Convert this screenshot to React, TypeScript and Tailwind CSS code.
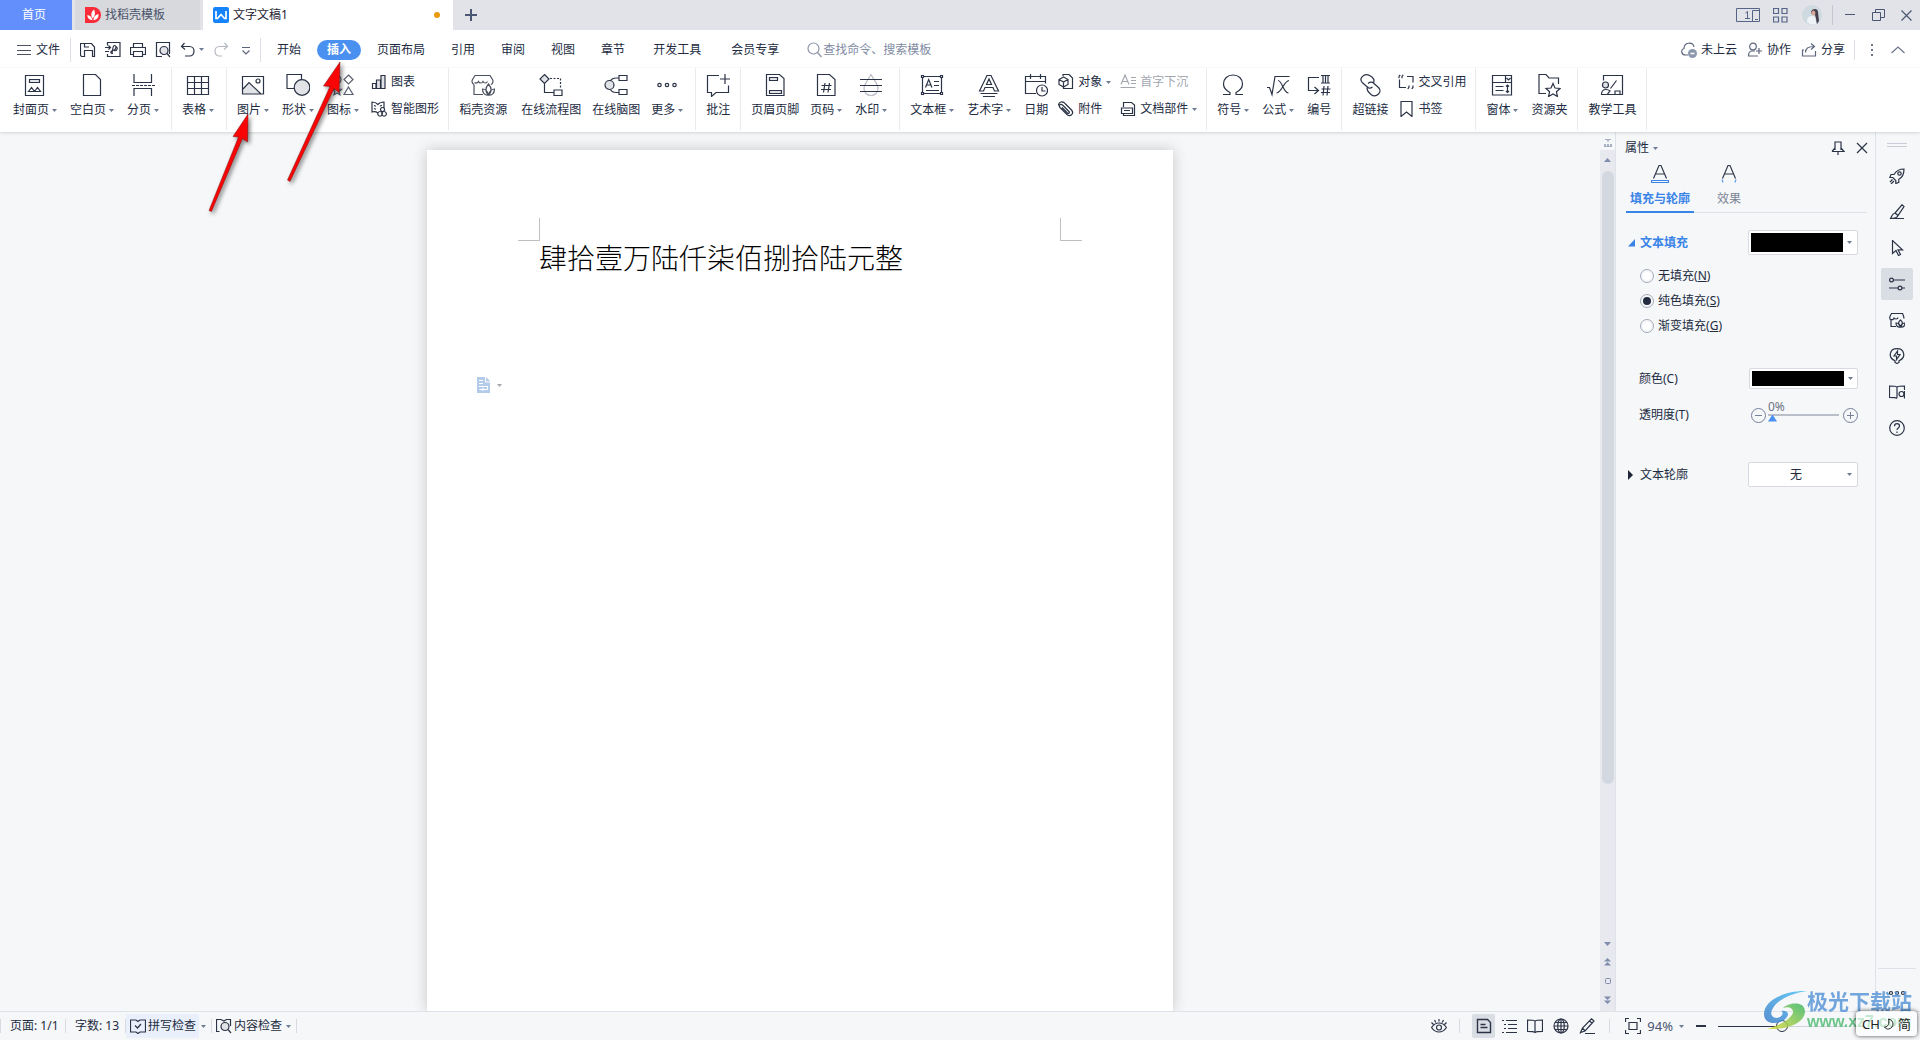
import React from "react";

const INK = "#2b3346";

type IconProps = { children: React.ReactNode; size?: 16 | 24; color?: string };

function Icon({ children, size = 16, color = INK }: IconProps) {
  return (
    <svg
      className="shrink-0"
      width={size}
      height={size}
      viewBox={`0 0 ${size} ${size}`}
      fill="none"
      stroke={color}
      strokeWidth={1.2}
      aria-hidden="true"
    >
      {children}
    </svg>
  );
}

function Caret({ color = "#6f7b92" }: { color?: string }) {
  return (
    <svg className="shrink-0" width="5" height="3" viewBox="0 0 5 3" fill={color} aria-hidden="true">
      <path d="M0 0h5L2.500 3z" />
    </svg>
  );
}

const G = "#e2e3e6";

/* ---------- large ribbon icons ---------- */
const big = {
  cover: (
    <>
      <path d="M2.500 2.500h18v20h-18z" />
      <path d="M6.500 6.500h10v3h-10z" fill={G} />
      <path d="M5.500 18.500l3-4 3 4zM11.500 18.500l3-4 3 4z" />
    </>
  ),
  blank: <path d="M3.500 1.500h12l5 5v16h-17z" />,
  pageBreak: (
    <>
      <path d="M3 1v8.500h17.500V1M3 23v-7.500h17.500V23" />
      <path d="M1 12.500h23" strokeDasharray="3 1" />
    </>
  ),
  table: (
    <>
      <path d="M1.500 3.500h21v18h-21z" />
      <path d="M1.500 9.500h21M1.500 15.500h21M8.500 3.500v18M15.500 3.500v18" />
    </>
  ),
  picture: (
    <>
      <path d="M2 17l6-7 12 11H2z" fill={G} stroke="none" />
      <path d="M1.500 3.500h21v17.500h-21zM2 16l6-6.500 12 11.500" />
      <circle cx="17" cy="8" r="2" />
    </>
  ),
  shape: (
    <>
      <path d="M1 1.500h14.500v14H1z" />
      <circle cx="16" cy="14.500" r="7.800" fill={G} />
    </>
  ),
  iconLib: (
    <>
      <circle cx="6" cy="6.500" r="4" />
      <path d="M17.500 2l4.500 4.500-4.500 4.500L13 6.500zM17.500 14l4.500 7.500h-9zM6 13l1.300 3 3.200.3-2.400 2.200.8 3.200L6 20l-2.900 1.700.8-3.200-2.400-2.200 3.200-.3z" />
    </>
  ),
  store: (
    <>
      <path d="M3 11.500v10h9M3 11.500C.5 10 .8 8 1.500 6.500L4 2.500h15l2.500 4c.8 1.500.8 4-1.500 5M3.500 9.500c1.500 1 3 .5 4-1 .8 2 3.500 2 4.500 0 1 2 3.500 2 4.500 0" />
      <path d="M17.500 22c-3.500-3-3.500-7 0-11 3.500 4 3.500 8 0 11zM17.500 22c-4 .5-6-2-6-6 3 0 5 2 6 6zM17.500 22c4 .5 6-2 6-6-3 0-5 2-6 6z" />
    </>
  ),
  flow: (
    <>
      <path d="M5.500 1.500l4.500 4.500-4.500 4.500L1 6z" fill={G} />
      <path d="M5.500 10.500v9h9.500M15 17h8v5.500h-8z" />
      <path d="M11 5.500h10.500V16" strokeDasharray="2 1.500" />
    </>
  ),
  mind: (
    <>
      <path d="M15 2.500h8v5h-8zM15 16.500h8v5h-8zM15 5H12c-3 0-4.500 1-5.500 3M15 19.500H12c-3 0-4.500-1-5.500-3" />
      <circle cx="5.500" cy="12" r="4.500" fill={G} />
    </>
  ),
  more: (
    <>
      <circle cx="4.500" cy="12" r="1.700" />
      <circle cx="12" cy="12" r="1.700" />
      <circle cx="19.500" cy="12" r="1.700" />
    </>
  ),
  comment: <path d="M13 2.500H1.500v17h4v4l4.500-4h12.500v-7M19 1v10M14 6h10" />,
  headerFooter: (
    <>
      <path d="M3.500 1.500h13l4.500 4v17H3.500z" />
      <path d="M6.500 4.500h8v3h-8zM6.500 17.500h12v3h-12z" fill={G} />
    </>
  ),
  pageNo: <path d="M3.500 1.500h12l5.500 5v16H3.500zM11 10l-1.500 9.500M15.500 10L14 19.500M7.500 12.500h10M7 16.500h10" />,
  watermark: (
    <>
      <path d="M12 1.500C9 7 5 11 5 15.500c0 4 3 7 7 7s7-3 7-7C19 11 15 7 12 1.500z" stroke="#b9bdc6" />
      <path d="M1 6.500h22M1 12.500h22M1 18.500h22" />
    </>
  ),
  textBox: (
    <>
      <path d="M2.500 3.500h19v17h-19z" />
      <path d="M1.500 2.500h2v2h-2zM20.500 2.500h2v2h-2zM1.500 19.500h2v2h-2zM20.500 19.500h2v2h-2z" fill="#fff" />
      <path d="M5.500 14.500l3.200-8 3.200 8M6.500 12h4.500M14 8.500h5M14 12.500h5M6 17.500h13" />
    </>
  ),
  wordArt: (
    <path d="M2.500 18L10 2.500h4L21.500 18h-4l-1.500-3.500H8L6.500 18zM9.500 11.500h5L12 6zM3.500 20.500h17M6 23.500h12" />
  ),
  date: (
    <>
      <path d="M12 20.500H1.500v-17h20v7M1.500 8.500h20M6.500 1v5M16.500 1v5" />
      <circle cx="18" cy="17.500" r="5.500" fill="#fff" />
      <path d="M18 14v4h3.500" />
    </>
  ),
  omega: <path d="M2 21.500h7v-2C5 17.500 2.500 15 2.500 11c0-5.500 4-9 9.500-9s9.500 3.500 9.500 9c0 4-2.500 6.500-6.500 8.500v2h7" />,
  formula: <path d="M1 14.500h2.500l2.500 7L9 3.500h14.500M12 7.500c4 0 5.500 12.500 10.500 12.500M23 7.500C18 8 16 19 10.500 20" />,
  numbering: (
    <path d="M12 4.500H1.500v13H11M7.500 14l4 3.500-4 3.500M14 2.500h9M14 10h9M16 2.500V10M18.500 2.500V10M21 2.500V10M17 13l-1 9.500M21 13l-1 9.500M14.500 16h9M14 19.500h9" />
  ),
  link: (
    <path d="M15 10.500c2-2.500.5-5-1-6.500L12 2.800c-3-1.800-5.500-1.500-7.500.5s-2 4.500 0 6.500l4.500 4c2 2 4 1.500 5.500 0M10 13.500c-2 2.500-.5 4.500 1 6l2 2c2.500 2 5 2 7.500-.5 2-2 2-4.500 0-6.500L16 10.500c-2-2-4-1.500-6 0" />
  ),
  form: (
    <path d="M2.500 2.500h19v19.500h-19zM2.500 9.500h19M15.500 2.500v7M16.500 5l2 2 2-2M5.500 13.500h8M5.500 17.500h8M17.500 12v7.500M16 13.500l1.500-1.500 1.500 1.500M16 18l1.500 1.500L19 18" />
  ),
  folder: (
    <path d="M9 20.500H2V1.500h7l3 3.500h9.500v6M16 10.500l2 4.500 5 .500-3.600 3.200 1 4.800L16 21l-4.400 2.500 1-4.800L9 15.500l5-.500z" />
  ),
  teach: (
    <>
      <path d="M3.500 7.500v-5h19v19h-21c0-3 1.500-5 4.500-5 2 0 3 .5 4 1.500l-2.500 3M10.500 15.500l6-8M15 21.500V18h5v3.500" />
      <circle cx="5.500" cy="12" r="3" fill={G} />
    </>
  ),
};

/* ---------- small icons ---------- */
const sm = {
  menu: <path d="M1 3.500h14M1 8.500h14M1 12.500h14" stroke="#4b5263" />,
  save: <path d="M4 14.500H1.500l-1-1V1.500h11L14.500 5v9.500H12M4.500 15V8.500h8V15M4.500 1.500V5H9" />,
  pdf: <path d="M2.500 3.500v-3h12.500v14H2.500V12M0 5.500h5M3.500 3.500l2 2-2 2M0 9.500h4M8 11.500c-3 0-3-2.500 0-3s4-5 1.500-5S8 11.500 6.500 12M9 8.500c4 .5 4-3.500 1.500-4" />,
  print: <path d="M3.500 5V1.500h9V5M3.500 12.500h-3V5.500h15v7h-3M3.500 9.500h9v5h-9z" />,
  preview: (
    <>
      <path d="M7 14.500H1.500V.500h13V12" />
      <circle cx="9" cy="8.500" r="4" fill={G} />
      <path d="M12 11.500l3 3.500" />
    </>
  ),
  undo: <path d="M4.500 1L1.500 4.500l3.500 3M2 4.500h7.500c6 0 6 9.500 0 9.500H5" />,
  redo: <path d="M11.500 1l3 3.500-3.500 3M14 4.500H6.500c-6 0-6 9.500 0 9.500H9" />,
  more: <path d="M4 5.500h8M4.500 8.500L8 12l3.500-3.500" stroke="#5b6479" />,
  search: (
    <>
      <circle cx="6.500" cy="6.500" r="5.500" />
      <path d="M10.500 10.500l4 4.500" />
    </>
  ),
  cloud: (
    <>
      <path d="M7 13H4.500C0 13-.5 7.500 3 6.500c0-6.500 9-7 10-1.500" />
      <circle cx="11.500" cy="11.500" r="4.500" fill="#8d98af" stroke="none" />
      <path d="M9.500 11.500h4" stroke="#fff" strokeWidth="1.500" />
    </>
  ),
  people: (
    <>
      <circle cx="6" cy="4.500" r="3.300" />
      <path d="M11 14H1.500c0-3 1-5 3.500-5h3M12 6v6M9 9h6" />
    </>
  ),
  share: <path d="M3 8H1.500v6h13V9M4.500 10.500c0-4 2.500-6 8.500-6M10 1.500l3.500 3-3.500 3" />,
  chart: (
    <>
      <path d="M1.500 9.500h3.500v5H1.500z" />
      <path d="M5.500 6h4v8.500h-4zM10 1.500h4v13h-4z" fill={G} />
    </>
  ),
  smart: (
    <path d="M7 12C5 10.500 3 10.500 1 11V1C3.500 1 5.500 2 7 3.500 8.500 1.500 10.500 1 13 1v6M3 4.500l2 .8M3 7.500l2 .8M9 5.300l1.800-1M11.500 6.500a2 2 0 1 0 .1 0M9 10.500a2.300 2.300 0 1 0 .1 0M13 10.500a2.300 2.300 0 1 0 .1 0" />
  ),
  object: (
    <>
      <path d="M5 2V.500h6l3.500 3.500v10.500H5.500v-2" />
      <path d="M5.500 3l4.500 2.500v5L5.500 13 1 10.500v-5zM1 5.500L5.500 8 10 5.500M5.500 8v5" fill="#fff" />
    </>
  ),
  clip: <path d="M4 6.500L9.500 12c1.200 1 2.500-.3 1.500-1.500L4.500 4C2.500 2.500.300 4.500 2 6.500l7 7c3.500 3 7.500-1 4.500-4.500L7.500 3C5-.300.500.500.500 4.500" />,
  dropCap: <path d="M1 10.500L5 1l4 9.500M2.500 7.500h5M11 3.500h5M11 6.500h5M11 9.500h5M.5 13.500h15" />,
  docPart: <path d="M3.500 6V1.500h8L14.500 4v10.500h-11v-2M1.500 7h11v5.500h-11zM4 9.500h6" />,
  crossRef: (
    <path d="M1.500 5.500v8H8M9 2.500h6v6M1 4.200V2.500L2.200.8M4 4.200V2.500L5.200.8M11 11.500v1.700L9.800 15M15 11.500v1.700L13.800 15" />
  ),
  bookmark: <path d="M3 .500h11v15L8.500 11 3 15.500z" />,
  pin: <path d="M5 10V2h6v8M2 11.500h12l-3-3.500M2 11.500L5 8M8 11.500V15" />,
  close: <path d="M3 3l10 10M13 3L3 13" />,
  rocket: (
    <>
      <path d="M15 1C10.500 1 7 3 5 6.500H2L.8 9.500h3l3 3v3l3-1.200v-3C13.500 9.500 15 5.500 15 1zM3.500 11.500L1 14M5 13l-3 3" />
      <circle cx="10.500" cy="5.500" r="1.700" />
    </>
  ),
  brush: <path d="M1 14.500h14M13 .800l2 1.700-6 9-3-2.500zM6 9c-3 .5-3 3-4.500 5.500 3 0 6.500 0 7.500-3z" />,
  cursor: <path d="M3.500.500v13l3.500-3 2.500 5 2-1-2.500-4.700h4.500z" />,
  sliders: (
    <>
      <path d="M4 4h12M0 12h9M13 12h3" />
      <circle cx="2.500" cy="4" r="1.900" />
      <circle cx="11" cy="12" r="1.900" />
    </>
  ),
  storeSmall: (
    <>
      <path d="M2 8v6.500h5M2 8C0 7 .5 4.500 2.500 1.500h11c1 2 1.500 3 1.500 5M2 7.500c2 .5 3-.500 3-2 0 2 4 2 4 0" />
      <path d="M11.500 15c-2.500-2.500-2.500-5 0-7 2.500 2 2.500 4.500 0 7zM11.500 15c-3 .5-4.500-1-4.500-4 2.500 0 4 1.500 4.500 4zM11.500 15c3 .5 4.500-1 4.500-4-2.500 0-4 1.500-4.500 4z" />
    </>
  ),
  bulb: <path d="M6 14.500v-1.700C-1.500 9.500.5.700 8 .700s9.500 8.800 2 12.100v1.700l-2 1zM8.500 3L5 8h2.500v3.500L11 6.500H8.500z" />,
  bookSearch: (
    <>
      <path d="M8 14.500c-1-1-3-1.200-7.500-1.200V2C5 2 7 2 8 3c1-1 3-1 7.500-1v4M8 3v11" />
      <circle cx="12.500" cy="10" r="2.500" />
      <path d="M15.500 7v7.500" />
    </>
  ),
  help: (
    <>
      <circle cx="8" cy="8" r="7.300" />
      <path d="M5.500 6.200c0-3.500 5-3.200 5-.300C10.500 8 8 8 8 10M8 11.500v1.500" />
    </>
  ),
  spell: <path d="M6 14H.500V2H6l2 1.500L10 2h5.500v12H10l-2 1.500zM5 7.500L7.500 10 11 6" />,
  content: (
    <>
      <path d="M3.500 13.500h-3v-12H5L8 3l2.500-1.500h4V8" />
      <circle cx="9" cy="8.500" r="4" fill={G} />
      <path d="M12 11.500l3 3.500" />
    </>
  ),
  eye: (
    <>
      <path d="M.5 9.500c4-6 11-6 15 0-4 6-11 6-15 0zM8 1v2.500M3.500 2l1.300 2.500M12.500 2l-1.300 2.500M.5 4.500l2 2M15.500 4.500l-2 2" />
      <circle cx="8" cy="9.500" r="2.500" />
    </>
  ),
  pageView: <path d="M1.500 1.500h10l3 3v10h-13zM4.500 6.500h5M4.500 9.500h7" strokeWidth="1.400" />,
  outline: <path d="M1 2.500h2M5 2.500h11M3 6.500h2M7 6.500h9M3 10.500h2M7 10.500h9M1 14.500h2M5 14.500h11" />,
  book: <path d="M8 14.500c-1-1-3-1.200-7.500-1.200V2C5 2 7 2 8 3c1-1 3-1 7.500-1v11.300c-4.500 0-6.500.2-7.500 1.200zM8 3v11" />,
  globe: (
    <>
      <circle cx="8" cy="8" r="7" />
      <ellipse cx="8" cy="8" rx="3.300" ry="7" />
      <path d="M1 8h14M2 4.500h12M2 11.500h12M8 1v14" />
    </>
  ),
  edit: <path d="M6 15.500h10M12.500.800L15 3 6 13l-4.500 1.500L3.500 10zM10.500 3L13 5M3.500 10L6 13M1 15.500l1-1.500" />,
  fit: <path d="M.5 4V.500H4M12 .500h3.500V4M15.500 12v3.500H12M4 15.500H.500V12M4 4.500h8v7H4z" />,
};

type RibbonButtonProps = { icon: keyof typeof big; label: string; caret?: boolean; color?: string };

function RibbonButton({ icon, label, caret, color }: RibbonButtonProps) {
  return (
    <button type="button" className={caret ? "flex flex-col items-center gap-[5px] pt-[5px] pr-[2px]" : "flex flex-col items-center gap-[5px] pt-[5px]"}>
      <Icon size={24} color={color}>{big[icon]}</Icon>
      <span className="flex h-4 items-center gap-[3px]">
        {label}
        {caret && <Caret />}
      </span>
    </button>
  );
}

type SmallButtonProps = { icon: keyof typeof sm; label: string; caret?: boolean; disabled?: boolean };

function SmallButton({ icon, label, caret, disabled }: SmallButtonProps) {
  return (
    <button type="button" disabled={disabled} className="flex h-4 items-center gap-1 disabled:text-[#a3a7b0]">
      <Icon color={disabled ? "#a3a7b0" : INK}>{sm[icon]}</Icon>
      {label}
      {caret && <Caret />}
    </button>
  );
}

function Group({ children }: { children: React.ReactNode }) {
  return <div className="flex shrink-0 items-start gap-[11px] border-r border-[#eaebee] px-[10px]">{children}</div>;
}

function Stack({ children }: { children: React.ReactNode }) {
  return <div className="-mx-px flex flex-col gap-[11px] pt-[6px]">{children}</div>;
}

function IconButton({ icon, label, color }: { icon: keyof typeof sm; label: string; color?: string }) {
  return (
    <button type="button" aria-label={label}>
      <Icon color={color}>{sm[icon]}</Icon>
    </button>
  );
}

function TitleBar() {
  return (
    <header className="flex h-[30px] shrink-0 bg-[#e1e3e8]">
      <button type="button" className="w-[72px] bg-[#628ffb] pr-1 text-white">首页</button>
      <button type="button" className="ml-[3px] flex w-[125px] items-center gap-1 bg-[#d7d9dd] pl-[10px] text-[#49536a]">
        <svg width="16" height="16" viewBox="0 0 16 16" aria-hidden="true">
          <path d="M0 0h8a8 8 0 0 1 0 16H0z" fill="#fb2b3a" />
          <path d="M7.500 13C4.500 13 2.500 11.500 2.300 8c2.500.3 4.200 1.500 5.200 5zM7.700 11.500C5.500 8.500 6 5 9 2.500c1.500 3 1.500 6-1.300 9zM8.500 13c0-3.500 2-5.500 5-6 .3 3.500-1.500 6-5 6z" fill="#fff" />
        </svg>
        找稻壳模板
      </button>
      <button type="button" className="ml-[3px] flex w-[250px] items-center gap-1 bg-white pr-[13px] pl-[10px] text-[#1d2433]">
        <svg width="16" height="16" viewBox="0 0 16 16" aria-hidden="true">
          <rect width="16" height="16" rx="2" fill="#1583fb" />
          <path d="M3 4v7.500h1.500L8 7.500l3.500 4H13V4" fill="none" stroke="#fff" strokeWidth="1.700" />
        </svg>
        文字文稿1
        <span className="ml-auto size-[6px] rounded-full bg-[#e99a0c]" />
      </button>
      <button type="button" aria-label="新建" className="ml-3">
        <svg width="12" height="12" viewBox="0 0 12 12" stroke="#4a5672" strokeWidth="2" aria-hidden="true">
          <path d="M0 6h12M6 0v12" />
        </svg>
      </button>
      <div className="ml-auto flex items-center pr-2">
        <button type="button" aria-label="窗口布局">
          <svg width="24" height="14" viewBox="0 0 24 14" fill="none" stroke="#566486" aria-hidden="true">
            <path d="M.5.500h23v13H.500zM16.500 13.500v-11h7M19 11.500h3M9.500 5l2-1.500V11M9 10.500h5" />
          </svg>
        </button>
        <button type="button" aria-label="应用" className="ml-[13px]">
          <svg width="15" height="15" viewBox="0 0 15 15" fill="none" stroke="#566486" strokeWidth="1.200" aria-hidden="true">
            <path d="M.5.500h5v5h-5zM9 .500h5v5H9zM.5 9h5v5h-5zM9 9h5v5H9z" />
          </svg>
        </button>
        <button type="button" aria-label="账号" className="ml-[14px]">
          <svg width="20" height="20" viewBox="0 0 20 20" aria-hidden="true">
            <circle cx="10" cy="10" r="10" fill="#cddae0" />
            <path d="M9 7c1-4 7-4 7 0l1 9-2 3c-1-4-1-7-2-9l-3-1z" fill="#453e4a" />
            <ellipse cx="11.500" cy="8" rx="2" ry="2.500" fill="#d9a797" />
            <path d="M5 17c0-4 2-6 5-6s4 3 4 8c-4 1-7 0-9-2z" fill="#eef4f5" />
          </svg>
        </button>
        <span className="mr-[11px] ml-[10px] h-5 w-px bg-[#c3c7cf]" />
        <button type="button" aria-label="最小化">
          <svg width="12" height="12" viewBox="0 0 12 12" stroke="#4a5672" aria-hidden="true"><path d="M1 5.500h10" /></svg>
        </button>
        <button type="button" aria-label="还原" className="ml-4">
          <svg width="13" height="13" viewBox="0 0 13 13" fill="none" stroke="#4a5672" aria-hidden="true"><path d="M.5 3.500h8v8h-8zM3.500 3.500V.500h9v8h-4" /></svg>
        </button>
        <button type="button" aria-label="关闭" className="ml-4">
          <svg width="11" height="11" viewBox="0 0 11 11" stroke="#4a5672" strokeWidth="1.200" aria-hidden="true"><path d="M.5.500l10 10M10.500.500l-10 10" /></svg>
        </button>
      </div>
    </header>
  );
}

function MenuBar() {
  return (
    <nav className="flex h-[38px] shrink-0 items-center bg-white pt-px">
      <button type="button" className="ml-4 flex items-center gap-1">
        <Icon>{sm.menu}</Icon>文件
      </button>
      <span className="mr-[9px] ml-[10px] h-6 w-px bg-[#dcdfe5]" />
      <div className="flex items-center gap-[9px]">
        <IconButton icon="save" label="保存" />
        <IconButton icon="pdf" label="输出为PDF" />
        <IconButton icon="print" label="打印" />
        <IconButton icon="preview" label="打印预览" />
        <button type="button" aria-label="撤销" className="flex items-center gap-[3px]">
          <Icon>{sm.undo}</Icon><Caret />
        </button>
        <IconButton icon="redo" label="恢复" color="#b3b7bf" />
        <IconButton icon="more" label="自定义快速访问工具栏" />
      </div>
      <span className="mr-[6px] ml-[6px] h-6 w-px bg-[#dcdfe5]" />
      <div className="flex items-center gap-[6px]">
        {["开始", "插入", "页面布局", "引用", "审阅", "视图", "章节"].map((t) => (
          <button key={t} type="button" className={t === "插入" ? "h-5 rounded-full bg-[#4a90f0] px-[10px] font-bold text-white" : "h-5 px-[10px]"}>
            {t}
          </button>
        ))}
        <button type="button" className="h-5 px-3">开发工具</button>
        <button type="button" className="h-5 px-3">会员专享</button>
      </div>
      <label className="ml-4 flex items-center">
        <Icon color="#8a94a8">{sm.search}</Icon>
        <input aria-label="查找命令、搜索模板" placeholder="查找命令、搜索模板" className="w-[120px] bg-transparent outline-none placeholder:text-[#7f8ba3]" />
      </label>
      <div className="ml-auto flex items-center gap-[10px]">
        <button type="button" className="flex items-center gap-1"><Icon color="#5d677d">{sm.cloud}</Icon>未上云</button>
        <button type="button" className="flex items-center gap-1"><Icon color="#5d677d">{sm.people}</Icon>协作</button>
        <button type="button" className="flex items-center gap-1"><Icon color="#5d677d">{sm.share}</Icon>分享</button>
      </div>
      <span className="ml-[9px] h-5 w-px bg-[#dcdfe5]" />
      <button type="button" aria-label="更多" className="ml-4">
        <svg width="2" height="12" viewBox="0 0 2 12" fill="#6b7488" aria-hidden="true"><path d="M0 0h2v2H0zM0 5h2v2H0zM0 10h2v2H0z" /></svg>
      </button>
      <button type="button" aria-label="折叠功能区" className="mr-[15px] ml-[18px]">
        <svg width="14" height="8" viewBox="0 0 14 8" fill="none" stroke="#6b7488" strokeWidth="1.200" aria-hidden="true"><path d="M.5 7L7 1l6.500 6" /></svg>
      </button>
    </nav>
  );
}

function Ribbon() {
  return (
    <div className="relative z-10 flex h-16 shrink-0 bg-white pb-[2px] pl-[3px] shadow-[0_1px_3px_rgba(0,0,0,0.15)]">
      <Group>
        <RibbonButton icon="cover" label="封面页" caret />
        <RibbonButton icon="blank" label="空白页" caret />
        <RibbonButton icon="pageBreak" label="分页" caret />
      </Group>
      <Group><RibbonButton icon="table" label="表格" caret /></Group>
      <Group>
        <RibbonButton icon="picture" label="图片" caret />
        <RibbonButton icon="shape" label="形状" caret />
        <RibbonButton icon="iconLib" label="图标" caret color="#5a6070" />
        <Stack>
          <SmallButton icon="chart" label="图表" />
          <SmallButton icon="smart" label="智能图形" />
        </Stack>
      </Group>
      <Group>
        <div className="mr-[3px]"><RibbonButton icon="store" label="稻壳资源" color="#4c5260" /></div>
        <RibbonButton icon="flow" label="在线流程图" />
        <RibbonButton icon="mind" label="在线脑图" />
        <RibbonButton icon="more" label="更多" caret />
      </Group>
      <Group><RibbonButton icon="comment" label="批注" /></Group>
      <Group>
        <RibbonButton icon="headerFooter" label="页眉页脚" />
        <RibbonButton icon="pageNo" label="页码" caret />
        <RibbonButton icon="watermark" label="水印" caret />
      </Group>
      <Group>
        <RibbonButton icon="textBox" label="文本框" caret />
        <RibbonButton icon="wordArt" label="艺术字" caret />
        <RibbonButton icon="date" label="日期" />
        <Stack>
          <SmallButton icon="object" label="对象" caret />
          <SmallButton icon="clip" label="附件" />
        </Stack>
        <Stack>
          <SmallButton icon="dropCap" label="首字下沉" disabled />
          <SmallButton icon="docPart" label="文档部件" caret />
        </Stack>
      </Group>
      <Group>
        <RibbonButton icon="omega" label="符号" caret />
        <RibbonButton icon="formula" label="公式" caret />
        <RibbonButton icon="numbering" label="编号" />
      </Group>
      <Group>
        <RibbonButton icon="link" label="超链接" />
        <Stack>
          <SmallButton icon="crossRef" label="交叉引用" />
          <SmallButton icon="bookmark" label="书签" />
        </Stack>
      </Group>
      <Group>
        <RibbonButton icon="form" label="窗体" caret />
        <RibbonButton icon="folder" label="资源夹" />
      </Group>
      <Group><RibbonButton icon="teach" label="教学工具" /></Group>
    </div>
  );
}

function Document() {
  return (
    <main className="flex min-w-0 flex-1 justify-center overflow-hidden pt-[18px]">
      <article className="w-[746px] bg-white px-[91px] pt-[68px] shadow-[0_0_14px_rgba(0,0,0,0.2)]">
        <div className="flex justify-between">
          <span className="h-[23px] w-[22px] border-r border-b border-[#bfbfbf]" />
          <span className="h-[23px] w-[22px] border-b border-l border-[#bfbfbf]" />
        </div>
        <p className="ml-[21px] text-[28px] leading-[34px] font-light whitespace-nowrap text-black">肆拾壹万陆仟柒佰捌拾陆元整</p>
        <button type="button" aria-label="粘贴选项" className="mt-[102px] -ml-[41px] flex items-center gap-[7px]">
          <svg width="13" height="16" viewBox="0 0 13 16" fill="none" stroke="#fff" aria-hidden="true">
            <path d="M0 0h9l4 4v12H0z" fill="#b4cbea" stroke="none" />
            <path d="M8.500 0v5H13M2 3.500h4M2 6.500h4M2 9.500h9M2.500 12.500h8v-3M6 11v3" />
          </svg>
          <Caret color="#a5a8ae" />
        </button>
      </article>
    </main>
  );
}

const ARROW = "#7f8cab";

function ScrollBar() {
  return (
    <div className="flex w-[15px] shrink-0 flex-col items-center bg-[#e7e9ef]">
      <div className="flex h-[18px] w-full items-center justify-center bg-[#f5f7f9] pt-[3px]">
        <svg width="8" height="8" viewBox="0 0 8 8" fill="#a7b0c3" aria-hidden="true"><path d="M1 0h6v1H5L4 4 3 1H1zM0 5h2v2h1V5h2v2h1V5h2v3H0z" /></svg>
      </div>
      <svg className="mt-2" width="7" height="4" viewBox="0 0 7 4" fill={ARROW} aria-hidden="true"><path d="M0 4l3.500-4L7 4z" /></svg>
      <div className="mt-[9px] h-[613px] w-3 shrink rounded-full bg-[#d3d7e0]" />
      <div className="mt-auto flex flex-col items-center gap-3 pb-[7px]">
        <svg width="7" height="4" viewBox="0 0 7 4" fill={ARROW} aria-hidden="true"><path d="M0 0h7L3.500 4z" /></svg>
        <svg width="7" height="8" viewBox="0 0 7 8" fill={ARROW} aria-hidden="true"><path d="M0 3.500L3.500 0 7 3.500zM0 7.500L3.500 4 7 7.500z" /></svg>
        <svg width="6" height="6" viewBox="0 0 6 6" fill="none" stroke={ARROW} aria-hidden="true"><rect x=".5" y=".5" width="5" height="5" rx="1" /></svg>
        <svg width="7" height="8" viewBox="0 0 7 8" fill={ARROW} aria-hidden="true"><path d="M0 .500h7L3.500 4zM0 4.500h7L3.500 8z" /></svg>
      </div>
    </div>
  );
}

function ColorButton({ label, short }: { label: string; short?: boolean }) {
  return (
    <button
      type="button"
      aria-label={label}
      className={
        short
          ? "ml-auto flex h-[21px] w-[109px] items-center gap-1 rounded-[2px] border border-[#d7dae0] bg-white p-[2px]"
          : "ml-auto flex h-[25px] w-[110px] items-center gap-1 rounded-[2px] border border-[#d7dae0] bg-white p-[2px]"
      }
    >
      <span className="h-full w-[92px] bg-black" />
      <Caret />
    </button>
  );
}

function Radio({ id, text, k, checked }: { id: string; text: string; k: string; checked?: boolean }) {
  return (
    <div className="flex h-[25px] items-center gap-1">
      <input id={id} type="radio" name="fill" defaultChecked={checked} className="size-[14px] appearance-none rounded-full border border-[#a4abb9] bg-white bg-clip-content p-[2px] checked:bg-[#222b40]" />
      <label htmlFor={id}>{text}(<u>{k}</u>)</label>
    </div>
  );
}

function PropertyPanel() {
  return (
    <aside className="flex w-[261px] shrink-0 flex-col border-x border-[#dfe2e8] pr-[17px] pl-[10px]">
      <div className="-mr-[12px] -ml-px flex h-8 items-center">
        <button type="button" className="flex items-center gap-1">属性<Caret /></button>
        <div className="ml-auto flex gap-2">
          <IconButton icon="pin" label="固定" />
          <IconButton icon="close" label="关闭面板" />
        </div>
      </div>
      <div className="-mr-[9px] flex border-b border-[#dfe2e8]">
        <button type="button" className="-mb-px flex w-[68px] flex-col items-center gap-2 border-b-2 border-[#3a84e8] pb-1 font-bold text-[#3a84e8]">
          <svg width="18" height="19" viewBox="0 0 18 19" fill="none" stroke="#333a4b" strokeWidth="1.200" aria-hidden="true">
            <path d="M2.500 14.500L8 1.500h2l5.500 13M4.500 10h9" />
            <path d="M.5 16.500h17v2H.500z" stroke="#3a84e8" />
          </svg>
          <span className="leading-4">填充与轮廓</span>
        </button>
        <button type="button" className="ml-[11px] flex w-12 flex-col items-center gap-2 pb-1 text-[#7c8595]">
          <svg width="18" height="19" viewBox="0 0 18 19" fill="none" stroke="#333a4b" strokeWidth="1.200" aria-hidden="true">
            <path d="M2.500 14.500L8 1.500h2l5.500 13M4.500 10h9" />
            <path d="M2 15.500l1 3M16 15.500l-1 3" stroke="#5f9bec" />
          </svg>
          <span className="leading-4">效果</span>
        </button>
      </div>
      <div className="mt-[17px] flex items-center">
        <button type="button" className="flex items-center gap-1 pl-[2px] font-bold text-[#3a84e8]">
          <svg width="8" height="8" viewBox="0 0 8 8" fill="#3a84e8" aria-hidden="true"><path d="M7 0v7.500H0z" /></svg>
          文本填充
        </button>
        <ColorButton label="文本填充颜色" />
      </div>
      <div className="mt-2 ml-[14px]">
        <Radio id="fill-none" text="无填充" k="N" />
        <Radio id="fill-solid" text="纯色填充" k="S" checked />
        <Radio id="fill-gradient" text="渐变填充" k="G" />
      </div>
      <div className="mt-[30px] ml-[13px] flex items-center">
        颜色(C)
        <ColorButton label="颜色" short />
      </div>
      <div className="mt-[15px] ml-[13px] flex h-[22px] items-center">
        <label htmlFor="opacity">透明度(T)</label>
        <div className="ml-auto flex w-[107px] items-center gap-[2px]">
          <button type="button" aria-label="减小">
            <svg width="15" height="15" viewBox="0 0 15 15" fill="none" stroke="#76809a" aria-hidden="true"><circle cx="7.500" cy="7.500" r="7" /><path d="M4 7.500h7" /></svg>
          </button>
          <div className="relative flex flex-1 items-center">
            <span className="absolute bottom-2 left-0 leading-4 text-[#6d7482]">0%</span>
            <input
              id="opacity"
              type="range"
              defaultValue={0}
              className="h-4 w-[71px] appearance-none bg-[linear-gradient(#b9bec9,#b9bec9)] bg-[length:100%_2px] bg-center bg-no-repeat [&::-webkit-slider-thumb]:mt-[6px] [&::-webkit-slider-thumb]:h-[7px] [&::-webkit-slider-thumb]:w-[9px] [&::-webkit-slider-thumb]:appearance-none [&::-webkit-slider-thumb]:bg-[#4a90f0] [&::-webkit-slider-thumb]:[clip-path:polygon(50%_0,100%_100%,0_100%)]"
            />
          </div>
          <button type="button" aria-label="增大">
            <svg width="15" height="15" viewBox="0 0 15 15" fill="none" stroke="#76809a" aria-hidden="true"><circle cx="7.500" cy="7.500" r="7" /><path d="M4 7.500h7M7.500 4v7" /></svg>
          </button>
        </div>
      </div>
      <div className="mt-9 flex items-center">
        <label htmlFor="text-outline" className="flex items-center gap-[7px] pl-[2px]">
          <svg width="5" height="10" viewBox="0 0 5 10" fill="#1f2638" aria-hidden="true"><path d="M0 0l5 5-5 5z" /></svg>
          文本轮廓
        </label>
        <div className="relative ml-auto flex items-center">
          <select id="text-outline" className="h-[25px] w-[110px] appearance-none rounded-[2px] border border-[#d7dae0] bg-white pr-4 pl-[2px] text-center outline-none">
            <option>无</option>
          </select>
          <span className="pointer-events-none absolute right-[6px]"><Caret /></span>
        </div>
      </div>
    </aside>
  );
}

function SideBar() {
  const items: [keyof typeof sm, string][] = [
    ["rocket", "快捷"],
    ["brush", "样式"],
    ["cursor", "选择"],
    ["sliders", "属性"],
    ["storeSmall", "稻壳"],
    ["bulb", "推荐"],
    ["bookSearch", "查阅"],
    ["help", "帮助"],
  ];
  return (
    <div className="flex w-11 shrink-0 flex-col items-center pr-[2px]">
      <span className="mt-[11px] h-1 w-5 shrink-0 border-y border-[#c9cdd5]" />
      <div className="mt-[13px] flex flex-col gap-1">
        {items.map(([icon, label]) => (
          <button key={label} type="button" aria-label={label} className={icon === "sliders" ? "flex size-8 items-center justify-center rounded-[2px] bg-[#d9dde4]" : "flex size-8 items-center justify-center"}>
            <Icon>{sm[icon]}</Icon>
          </button>
        ))}
      </div>
      <div className="mt-auto flex h-[43px] w-[38px] shrink-0 items-center justify-center border-t border-[#dfe2e8] pt-[6px]">
        <button type="button" aria-label="更多工具">
          <Icon><circle cx="2" cy="8" r="1.500" /><circle cx="8" cy="8" r="1.500" /><circle cx="14" cy="8" r="1.500" /></Icon>
        </button>
      </div>
    </div>
  );
}

function Sep() {
  return <span className="h-[14px] w-px shrink-0 bg-[#d8dbe1]" />;
}

function StatusBar() {
  return (
    <footer className="flex h-[29px] shrink-0 items-center border-t border-[#dfe2e8]">
      <Sep />
      <span className="w-16 pl-[9px]">页面: 1/1</span>
      <Sep />
      <span className="w-[59px] pl-[9px]">字数: 13</span>
      <Sep />
      <button type="button" className="flex h-6 w-[73px] items-center gap-[2px] bg-[#e9f0fb] pl-1"><Icon>{sm.spell}</Icon>拼写检查</button>
      <button type="button" aria-label="拼写检查选项" className="flex w-3 pl-[2px]"><Caret /></button>
      <Sep />
      <button type="button" className="flex items-center gap-[2px] pl-1"><Icon>{sm.content}</Icon>内容检查</button>
      <button type="button" aria-label="内容检查选项" className="flex w-[14px] pl-1"><Caret /></button>
      <Sep />
      <div className="ml-auto flex items-center">
        <IconButton icon="eye" label="护眼模式" />
        <span className="mx-3 flex"><Sep /></span>
        <button type="button" aria-label="页面视图" className="flex h-6 w-[23px] items-center justify-center rounded-[2px] bg-[#d9dde4]"><Icon>{sm.pageView}</Icon></button>
        <span className="ml-[6px] flex gap-[10px]">
          <IconButton icon="outline" label="大纲" />
          <IconButton icon="book" label="阅读版式" />
          <IconButton icon="globe" label="Web版式" />
          <IconButton icon="edit" label="写作模式" />
        </span>
        <span className="mr-[15px] ml-[14px] flex"><Sep /></span>
        <IconButton icon="fit" label="最佳显示比例" />
        <button type="button" className="ml-[6px] flex items-center gap-[6px] text-[13px] text-[#4a5672]">94%<Caret /></button>
        <button type="button" aria-label="缩小" className="ml-3 flex h-4 w-[10px] items-center"><span className="h-[2px] w-full bg-[#2b3346]" /></button>
        <input
          type="range"
          aria-label="显示比例"
          defaultValue={50}
          className="mr-[74px] ml-3 h-4 w-[128px] appearance-none bg-[linear-gradient(90deg,#2b3346_50%,#cfd4dc_50%)] bg-[length:100%_1px] bg-center bg-no-repeat [&::-webkit-slider-thumb]:size-3 [&::-webkit-slider-thumb]:appearance-none [&::-webkit-slider-thumb]:rounded-full [&::-webkit-slider-thumb]:border [&::-webkit-slider-thumb]:border-[#2b3346] [&::-webkit-slider-thumb]:bg-[#f5f7f9]"
        />
      </div>
    </footer>
  );
}

function Annotations() {
  return (
    <svg className="pointer-events-none absolute top-0 left-0 z-20 drop-shadow-[2px_2px_2px_rgba(0,0,0,0.5)]" width="360" height="220" viewBox="0 0 360 220" fill="#fa0505" stroke="#7d0d0d" strokeWidth="0.500" aria-hidden="true">
      <path d="M248 114l-15 22.500 5.500.5-29.500 73.500 2.500 1 31-73 5 3.500z" />
      <path d="M340 62l-16.500 24 6.500.5L287.500 180l2.500 1.500L334 88.500l5 4z" />
    </svg>
  );
}

function Watermark() {
  return (
    <div className="pointer-events-none absolute right-2 bottom-2 z-20 flex items-start opacity-85">
      <svg width="43" height="41" viewBox="0 0 43 41" aria-hidden="true">
        <defs>
          <linearGradient id="wm-blue" x1="0" y1="1" x2="1" y2="0">
            <stop offset="0" stopColor="#3d7fcb" />
            <stop offset="1" stopColor="#4fc3f7" />
          </linearGradient>
          <linearGradient id="wm-green" x1="0" y1="1" x2="1" y2="0">
            <stop offset="0" stopColor="#e0da3c" />
            <stop offset="1" stopColor="#3cb868" />
          </linearGradient>
        </defs>
        <path d="M43 1C22 0 0 10 0 24c0 6 4 9 10 9 8 0 14-5 14-9 0-3-4-4-7-3 3 1 2 6-4 7-5 0-7-4-5-8C12 10 28 3 43 1z" fill="url(#wm-blue)" />
        <path d="M19 18c5-5 22-8 22 4-1 11-17 18-38 17 11-3 23-9 26-16 1-5-5-7-10-5z" fill="url(#wm-green)" />
      </svg>
      <div className="flex flex-col">
        <span className="text-[21px] leading-[22px] font-bold text-[#5a97d8]">极光下载站</span>
        <span className="font-[Liberation_Sans] text-base leading-5 font-bold text-[#55bd78]">www.xz7.com</span>
      </div>
    </div>
  );
}

function ImeBar() {
  return (
    <div className="absolute right-[3px] bottom-1 z-20 flex h-[25px] w-[61px] items-center justify-center gap-1 rounded-[4px] bg-white/60 text-[13px] text-[#222] shadow-[0_0_4px_rgba(0,0,0,0.7)]">
      CH
      <svg width="10" height="12" viewBox="0 0 10 12" fill="none" stroke="#222" aria-hidden="true"><path d="M4.500 1c6 1 6 9 0 10-1.500.3-3-.5-4-2 4 0 5-4 4-8z" /></svg>
      简
    </div>
  );
}

export default function App() {
  return (
    <div className="relative flex h-screen flex-col overflow-hidden bg-[#f5f7f9] font-['Noto_Sans','Noto_Sans_CJK_SC',sans-serif] text-[12px] leading-4 text-[#222b3f]">
      <TitleBar />
      <MenuBar />
      <Ribbon />
      <div className="flex min-h-0 flex-1">
        <Document />
        <ScrollBar />
        <PropertyPanel />
        <SideBar />
      </div>
      <StatusBar />
      <Annotations />
      <Watermark />
      <ImeBar />
    </div>
  );
}
